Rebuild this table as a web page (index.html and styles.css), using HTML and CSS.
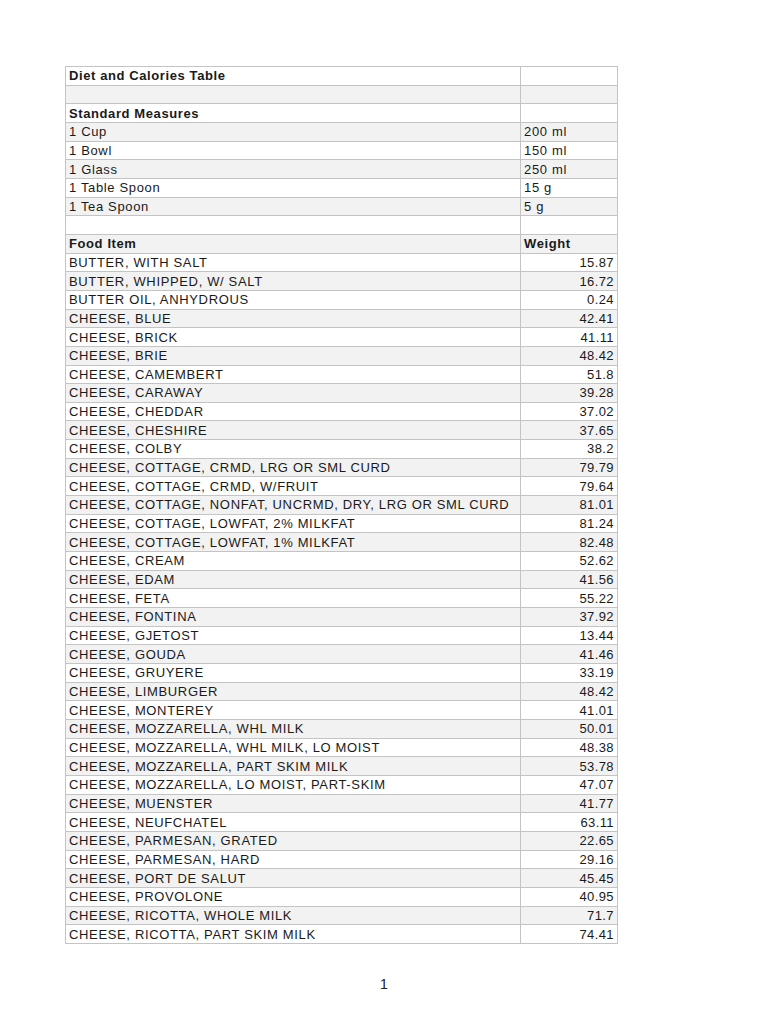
FILE: index.html
```html
<!DOCTYPE html>
<html>
<head>
<meta charset="utf-8">
<link rel="stylesheet" href="styles.css">
</head>
<body>
<div class="page">
<table class="sheet">
<tbody>
<tr><td class="b">Diet and Calories Table</td><td></td></tr>
<tr><td></td><td></td></tr>
<tr><td class="b">Standard Measures</td><td></td></tr>
<tr><td>1 Cup</td><td>200 ml</td></tr>
<tr><td>1 Bowl</td><td>150 ml</td></tr>
<tr><td>1 Glass</td><td>250 ml</td></tr>
<tr><td>1 Table Spoon</td><td>15 g</td></tr>
<tr><td>1 Tea Spoon</td><td>5 g</td></tr>
<tr><td></td><td></td></tr>
<tr><td class="b">Food Item</td><td class="b">Weight</td></tr>
<tr><td>BUTTER, WITH SALT</td><td class="n">15.87</td></tr>
<tr><td>BUTTER, WHIPPED, W/ SALT</td><td class="n">16.72</td></tr>
<tr><td>BUTTER OIL, ANHYDROUS</td><td class="n">0.24</td></tr>
<tr><td>CHEESE, BLUE</td><td class="n">42.41</td></tr>
<tr><td>CHEESE, BRICK</td><td class="n">41.11</td></tr>
<tr><td>CHEESE, BRIE</td><td class="n">48.42</td></tr>
<tr><td>CHEESE, CAMEMBERT</td><td class="n">51.8</td></tr>
<tr><td>CHEESE, CARAWAY</td><td class="n">39.28</td></tr>
<tr><td>CHEESE, CHEDDAR</td><td class="n">37.02</td></tr>
<tr><td>CHEESE, CHESHIRE</td><td class="n">37.65</td></tr>
<tr><td>CHEESE, COLBY</td><td class="n">38.2</td></tr>
<tr><td>CHEESE, COTTAGE, CRMD, LRG OR SML CURD</td><td class="n">79.79</td></tr>
<tr><td>CHEESE, COTTAGE, CRMD, W/FRUIT</td><td class="n">79.64</td></tr>
<tr><td>CHEESE, COTTAGE, NONFAT, UNCRMD, DRY, LRG OR SML CURD</td><td class="n">81.01</td></tr>
<tr><td>CHEESE, COTTAGE, LOWFAT, 2% MILKFAT</td><td class="n">81.24</td></tr>
<tr><td>CHEESE, COTTAGE, LOWFAT, 1% MILKFAT</td><td class="n">82.48</td></tr>
<tr><td>CHEESE, CREAM</td><td class="n">52.62</td></tr>
<tr><td>CHEESE, EDAM</td><td class="n">41.56</td></tr>
<tr><td>CHEESE, FETA</td><td class="n">55.22</td></tr>
<tr><td>CHEESE, FONTINA</td><td class="n">37.92</td></tr>
<tr><td>CHEESE, GJETOST</td><td class="n">13.44</td></tr>
<tr><td>CHEESE, GOUDA</td><td class="n">41.46</td></tr>
<tr><td>CHEESE, GRUYERE</td><td class="n">33.19</td></tr>
<tr><td>CHEESE, LIMBURGER</td><td class="n">48.42</td></tr>
<tr><td>CHEESE, MONTEREY</td><td class="n">41.01</td></tr>
<tr><td>CHEESE, MOZZARELLA, WHL MILK</td><td class="n">50.01</td></tr>
<tr><td>CHEESE, MOZZARELLA, WHL MILK, LO MOIST</td><td class="n">48.38</td></tr>
<tr><td>CHEESE, MOZZARELLA, PART SKIM MILK</td><td class="n">53.78</td></tr>
<tr><td>CHEESE, MOZZARELLA, LO MOIST, PART-SKIM</td><td class="n">47.07</td></tr>
<tr><td>CHEESE, MUENSTER</td><td class="n">41.77</td></tr>
<tr><td>CHEESE, NEUFCHATEL</td><td class="n">63.11</td></tr>
<tr><td>CHEESE, PARMESAN, GRATED</td><td class="n">22.65</td></tr>
<tr><td>CHEESE, PARMESAN, HARD</td><td class="n">29.16</td></tr>
<tr><td>CHEESE, PORT DE SALUT</td><td class="n">45.45</td></tr>
<tr><td>CHEESE, PROVOLONE</td><td class="n">40.95</td></tr>
<tr><td>CHEESE, RICOTTA, WHOLE MILK</td><td class="n">71.7</td></tr>
<tr><td>CHEESE, RICOTTA, PART SKIM MILK</td><td class="n">74.41</td></tr>
</tbody>
</table>
<div class="pagenum">1</div>
</div>
</body>
</html>
```

FILE: styles.css
```css
html, body {
  margin: 0;
  padding: 0;
  background: #ffffff;
}
body {
  font-family: "Liberation Sans", Arial, sans-serif;
  color: #1a1a1a;
}
.page {
  width: 768px;
  height: 1024px;
  padding-top: 66px;
  box-sizing: border-box;
}
.sheet {
  margin-left: 65px;
  width: 553px;
  border-collapse: collapse;
  table-layout: fixed;
  font-size: 13px;
  letter-spacing: 0.65px;
}
.sheet td {
  height: 17.66px;
  padding: 0 3px;
  border: 1px solid #c4c4c4;
  line-height: 17px;
  white-space: nowrap;
  overflow: hidden;
  vertical-align: middle;
}
.sheet td:first-child {
  width: 448px;
}
.sheet tr:nth-child(even) td {
  background: #f2f2f2;
}
.sheet td.b {
  font-weight: bold;
  letter-spacing: 0.6px;
}
.sheet td.n {
  text-align: right;
  padding-right: 3px;
  letter-spacing: 0.4px;
}
.pagenum {
  margin-top: 32px;
  text-align: center;
  font-size: 14px;
  color: #222;
}
```
